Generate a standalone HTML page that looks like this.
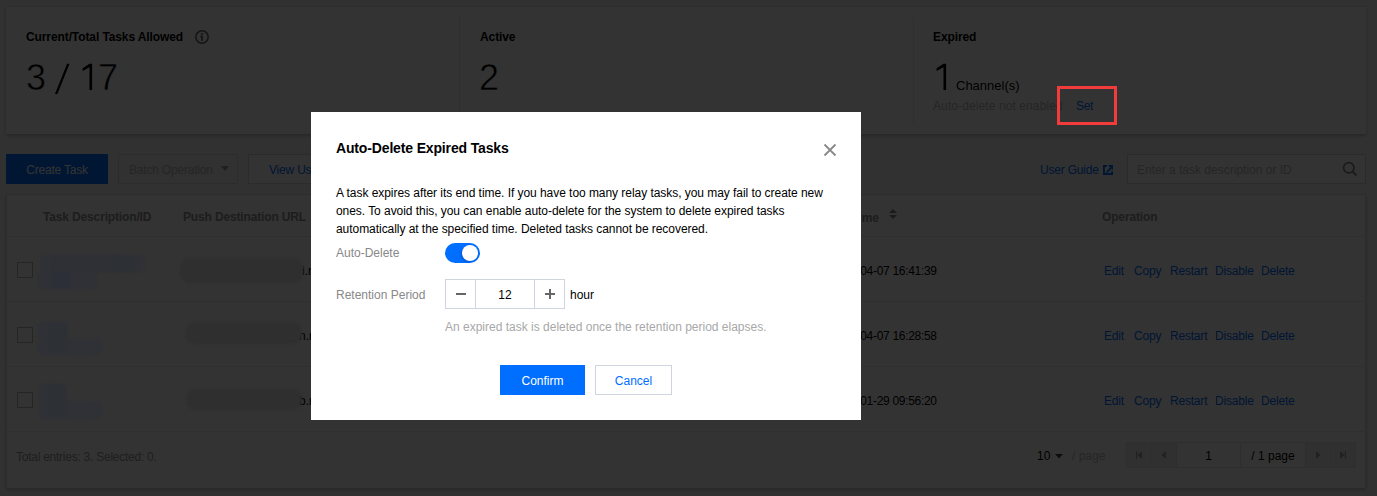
<!DOCTYPE html>
<html><head><meta charset="utf-8">
<style>
*{box-sizing:border-box;margin:0;padding:0}
html,body{width:1377px;height:496px;overflow:hidden}
body{background:#f3f4f7;font-family:"Liberation Sans",sans-serif;font-size:12px;color:#000;position:relative}
.a{position:absolute;white-space:nowrap;line-height:1}
.card{position:absolute;background:#fff;box-shadow:0 2px 3px rgba(0,0,0,.2)}
.lbl{position:absolute;font-weight:bold;font-size:12px;color:#000;white-space:nowrap;line-height:1;letter-spacing:-0.1px}
.big{position:absolute;font-size:36px;color:#000;white-space:nowrap;line-height:1;-webkit-text-stroke:0.5px #fff}
.vsep{position:absolute;width:1px;background:#e7eaef}
.btn{position:absolute;height:30px;line-height:29px;padding-top:1px;text-align:center;font-size:12px;white-space:nowrap;letter-spacing:-0.2px;border:1px solid #d3d8de;background:#fff}
.th{position:absolute;font-weight:bold;color:#909090;white-space:nowrap;line-height:1;letter-spacing:-0.15px}
.hline{position:absolute;height:1px;background:#e7eaef}
.cb{position:absolute;width:16px;height:16px;border:1px solid #b8b8b8;background:#fff}
.op{position:absolute;color:#006eff;white-space:nowrap;line-height:1;letter-spacing:-0.2px}
.blob{position:absolute;filter:blur(1px)}
.mask{position:absolute;left:0;top:0;width:1377px;height:496px;background:rgba(0,0,0,.8)}
.modal{position:absolute;left:311px;top:112px;width:549px;height:308px;background:#fff}
.pg{position:absolute;top:442px;height:26px;background:#eef0f4;border:1px solid #dfe4e9}
</style></head><body>
<!-- summary card -->
<div class="card" style="left:6px;top:6px;width:1360px;height:128px;border-top:1px solid #e0e3e8"></div>
<div class="vsep" style="left:459px;top:16px;height:108px"></div>
<div class="vsep" style="left:913px;top:17px;height:108px"></div>
<div class="lbl" style="left:26px;top:31px">Current/Total Tasks Allowed</div>
<svg class="a" style="left:195px;top:30px" width="14" height="14" viewBox="0 0 14 14"><circle cx="7" cy="7" r="6.2" fill="none" stroke="#666" stroke-width="1.5"/><rect x="6.1" y="3.2" width="1.8" height="1.8" fill="#666"/><path d="M5.2 5.8H7.9V10.8H6.1V7H5.2Z" fill="#666"/></svg>
<div class="big" style="left:26px;top:60px">3</div><svg class="a" style="left:55px;top:63px" width="15" height="32" viewBox="0 0 15 32"><path d="M12.1 0.8H14.5L2.4 31H0Z" fill="#000"/></svg><svg class="a" style="left:82.4px;top:63px" width="11" height="28" viewBox="0 0 11 28"><path d="M7.5 0.7H10.1V26.9H7.5V4.3L0.6 7.9V5.3Z" fill="#000"/></svg><div class="big" style="left:98px;top:60px">7</div>
<div class="lbl" style="left:480px;top:31px">Active</div>
<div class="big" style="left:479px;top:60px">2</div>
<div class="lbl" style="left:933px;top:31px">Expired</div>
<svg class="a" style="left:935.9px;top:63px" width="11" height="28" viewBox="0 0 11 28"><path d="M7.5 0.7H10.1V26.9H7.5V4.3L0.6 7.9V5.3Z" fill="#000"/></svg>
<div class="a" style="left:956px;top:79px;font-size:13px">Channel(s)</div>
<div class="a" style="left:933px;top:100px;color:#bbb;letter-spacing:0.1px">Auto-delete not enabled</div>
<div class="a" style="left:1076px;top:100px;color:#006eff;letter-spacing:-0.3px">Set</div>

<!-- toolbar -->
<div class="btn" style="left:6px;top:154px;width:102px;background:#006eff;border-color:#006eff;color:#fff">Create Task</div>
<div class="btn" style="left:118px;top:154px;width:120px;background:#f2f2f2;border-color:#d6d9dd;color:#bbb;text-align:left;padding-left:10px">Batch Operation<svg style="position:absolute;left:102px;top:11px" width="8" height="6" viewBox="0 0 8 6"><path d="M0 0H8L4 5Z" fill="#999"/></svg></div>
<div class="btn" style="left:248px;top:154px;width:110px;color:#006eff;text-align:left;padding-left:20px">View Usage</div>
<div class="a" style="left:1040px;top:164px;color:#006eff;letter-spacing:-0.2px">User Guide</div>
<svg class="a" style="left:1103px;top:165px" width="10" height="10" viewBox="0 0 10 10"><path d="M0 0H3.8V1.9H1.9V8.1H8.1V6.2H10V10H0Z" fill="#006eff"/><path d="M4.8 0H10V5.2Z" fill="#006eff"/><path d="M3.6 7.4L8 3" stroke="#006eff" stroke-width="1.9"/></svg>
<div class="btn" style="left:1127px;top:154px;width:239px;text-align:left;padding-left:9px;color:#bbb;border-color:#cfd5de;letter-spacing:0">Enter a task description or ID</div>
<svg class="a" style="left:1342px;top:161px" width="16" height="16" viewBox="0 0 16 16"><circle cx="6.8" cy="6.8" r="5.2" fill="none" stroke="#888" stroke-width="1.8"/><path d="M10.5 10.5L14.5 14.5" stroke="#888" stroke-width="2"/></svg>

<!-- table -->
<div class="card" style="left:6px;top:194px;width:1360px;height:294px;border:1px solid #d9dce1;border-bottom:none;box-shadow:0 2px 3px rgba(0,0,0,.2)"></div>
<div class="hline" style="left:6px;top:236px;width:1360px"></div>
<div class="hline" style="left:6px;top:301px;width:1360px"></div>
<div class="hline" style="left:6px;top:366px;width:1360px"></div>
<div class="hline" style="left:6px;top:431px;width:1360px"></div>
<div class="th" style="left:43px;top:211px">Task Description/ID</div>
<div class="th" style="left:183px;top:211px">Push Destination URL</div>
<div class="th" style="left:801px;top:212px">Creation Time</div>
<svg class="a" style="left:889px;top:209px" width="8" height="10" viewBox="0 0 8 10"><path d="M4 0L8 4H0Z M4 10L8 6H0Z" fill="#888"/></svg>
<div class="th" style="left:1102px;top:211px">Operation</div>

<div class="cb" style="left:17px;top:262px"></div>
<div class="cb" style="left:17px;top:327px"></div>
<div class="cb" style="left:17px;top:392px"></div>

<div class="a" style="left:302px;top:265px">i.r</div>
<div class="a" style="left:299px;top:330px">n.r</div>
<div class="a" style="left:299px;top:395px">b.r</div>
<div class="a" style="left:831px;top:265px;letter-spacing:-0.3px">2023-04-07 16:41:39</div>
<div class="a" style="left:831px;top:330px;letter-spacing:-0.3px">2023-04-07 16:28:58</div>
<div class="a" style="left:831px;top:395px;letter-spacing:-0.3px">2023-01-29 09:56:20</div>

<div class="op" style="left:1104px;top:265px">Edit</div><div class="op" style="left:1134px;top:265px">Copy</div><div class="op" style="left:1170px;top:265px">Restart</div><div class="op" style="left:1215px;top:265px">Disable</div><div class="op" style="left:1261px;top:265px">Delete</div>
<div class="op" style="left:1104px;top:330px">Edit</div><div class="op" style="left:1134px;top:330px">Copy</div><div class="op" style="left:1170px;top:330px">Restart</div><div class="op" style="left:1215px;top:330px">Disable</div><div class="op" style="left:1261px;top:330px">Delete</div>
<div class="op" style="left:1104px;top:395px">Edit</div><div class="op" style="left:1134px;top:395px">Copy</div><div class="op" style="left:1170px;top:395px">Restart</div><div class="op" style="left:1215px;top:395px">Disable</div><div class="op" style="left:1261px;top:395px">Delete</div>

<div class="a" style="left:16px;top:451px;color:#999;letter-spacing:-0.25px">Total entries: 3. Selected: 0.</div>
<div class="a" style="left:1037px;top:450px">10</div>
<svg class="a" style="left:1055px;top:454px" width="8" height="5" viewBox="0 0 8 5"><path d="M0 0H8L4 4.5Z" fill="#444"/></svg>
<div class="a" style="left:1072px;top:450px;color:#bbb">/ page</div>
<div class="a" style="left:1126px;top:442px;width:230px;height:26px;border:1px solid #dfe4e9;background:#fff"></div>
<div class="pg" style="left:1126px;width:26px"></div>
<div class="pg" style="left:1151px;width:26px"></div>
<div class="a" style="left:1176px;top:442px;width:65px;height:26px;text-align:center;line-height:28px">1</div>
<div class="a" style="left:1240px;top:442px;width:66px;height:26px;border-left:1px solid #dfe4e9;border-right:1px solid #dfe4e9;text-align:center;line-height:28px">/ 1 page</div>
<div class="pg" style="left:1305px;width:26px"></div>
<div class="pg" style="left:1330px;width:26px"></div>
<svg class="a" style="left:1135px;top:451px" width="8" height="8" viewBox="0 0 8 8"><rect x="1" y="0" width="1.2" height="8" fill="#aaa"/><path d="M7 0V8L2.2 4Z" fill="#aaa"/></svg>
<svg class="a" style="left:1160px;top:451px" width="8" height="8" viewBox="0 0 8 8"><path d="M6.2 0V8L1.2 4Z" fill="#aaa"/></svg>
<svg class="a" style="left:1315px;top:451px" width="8" height="8" viewBox="0 0 8 8"><path d="M1 0V8L5.8 4Z" fill="#aaa"/></svg>
<svg class="a" style="left:1339px;top:451px" width="8" height="8" viewBox="0 0 8 8"><path d="M1 0V8L5.8 4Z" fill="#aaa"/><rect x="5.8" y="0" width="1.2" height="8" fill="#aaa"/></svg>

<div class="mask"></div>

<!-- blurred content (above mask) -->
<div class="blob" style="left:40px;top:255px;width:105px;height:17px;background:rgb(47,49,54);border-radius:8px"></div>
<div class="blob" style="left:37px;top:271px;width:60px;height:18px;background:rgb(47,49,54);border-radius:8px"></div>
<div class="blob" style="left:52px;top:256px;width:65px;height:15px;background:rgb(46,48,53)"></div>
<div class="blob" style="left:52px;top:272px;width:17px;height:16px;background:rgb(44,47,55)"></div>
<div class="blob" style="left:118px;top:256px;width:17px;height:15px;background:rgb(45,48,52)"></div>
<div class="blob" style="left:180px;top:258px;width:123px;height:25px;background:rgb(47,47,48);border-radius:10px"></div>
<div class="blob" style="left:37px;top:322px;width:31px;height:18px;background:rgb(47,49,54);border-radius:7px"></div>
<div class="blob" style="left:37px;top:339px;width:65px;height:16px;background:rgb(47,49,54);border-radius:7px"></div>
<div class="blob" style="left:50px;top:323px;width:16px;height:31px;background:rgb(45,48,53)"></div>
<div class="blob" style="left:186px;top:322px;width:116px;height:22px;background:rgb(47,47,48);border-radius:10px"></div>
<div class="blob" style="left:38px;top:384px;width:28px;height:18px;background:rgb(47,49,54);border-radius:7px"></div>
<div class="blob" style="left:38px;top:401px;width:64px;height:18px;background:rgb(47,49,54);border-radius:7px"></div>
<div class="blob" style="left:50px;top:386px;width:16px;height:32px;background:rgb(45,48,53)"></div>
<div class="blob" style="left:186px;top:389px;width:116px;height:21px;background:rgb(47,47,48);border-radius:10px"></div>
<!-- modal -->
<div class="modal" style="width:550px"></div>
<div class="a" style="left:336px;top:141px;font-size:14px;font-weight:bold;letter-spacing:-0.15px">Auto-Delete Expired Tasks</div>
<svg class="a" style="left:823px;top:143px" width="14" height="14" viewBox="0 0 14 14"><path d="M1.5 1.5L12.5 12.5M12.5 1.5L1.5 12.5" stroke="#888" stroke-width="1.8"/></svg>
<div class="a" style="left:336px;top:184px;line-height:18px;letter-spacing:-0.05px">A task expires after its end time. If you have too many relay tasks, you may fail to create new<br>ones. To avoid this, you can enable auto-delete for the system to delete expired tasks<br>automatically at the specified time. Deleted tasks cannot be recovered.</div>
<div class="a" style="left:336px;top:247px;color:#888">Auto-Delete</div>
<div class="a" style="left:445px;top:243px;width:35px;height:20px;border-radius:10px;background:#006eff"></div>
<div class="a" style="left:462px;top:245px;width:16px;height:16px;border-radius:50%;background:#fff;box-shadow:-1px 1px 2px rgba(0,30,100,.3)"></div>
<div class="a" style="left:336px;top:289px;color:#888">Retention Period</div>
<div class="a" style="left:445px;top:279px;width:120px;height:30px;border:1px solid #cfd5de"></div>
<div class="a" style="left:475px;top:279px;width:1px;height:30px;background:#cfd5de"></div>
<div class="a" style="left:534px;top:279px;width:1px;height:30px;background:#cfd5de"></div>
<div class="a" style="left:456px;top:293px;width:10px;height:2px;background:#666"></div>
<div class="a" style="left:545px;top:293px;width:10px;height:2px;background:#666"></div>
<div class="a" style="left:549px;top:289px;width:2px;height:10px;background:#666"></div>
<div class="a" style="left:476px;top:289px;width:58px;text-align:center">12</div>
<div class="a" style="left:570px;top:289px">hour</div>
<div class="a" style="left:445px;top:321px;color:#a8a8a8">An expired task is deleted once the retention period elapses.</div>
<div class="a" style="left:500px;top:365px;width:85px;height:30px;background:#006eff;color:#fff;text-align:center;line-height:32px">Confirm</div>
<div class="a" style="left:595px;top:365px;width:77px;height:30px;border:1px solid #cfd5de;color:#006eff;text-align:center;line-height:30px">Cancel</div>

<!-- red annotation -->
<div class="a" style="left:1057px;top:86px;width:60px;height:39px;border:3px solid #f23c3c"></div>
</body></html>
